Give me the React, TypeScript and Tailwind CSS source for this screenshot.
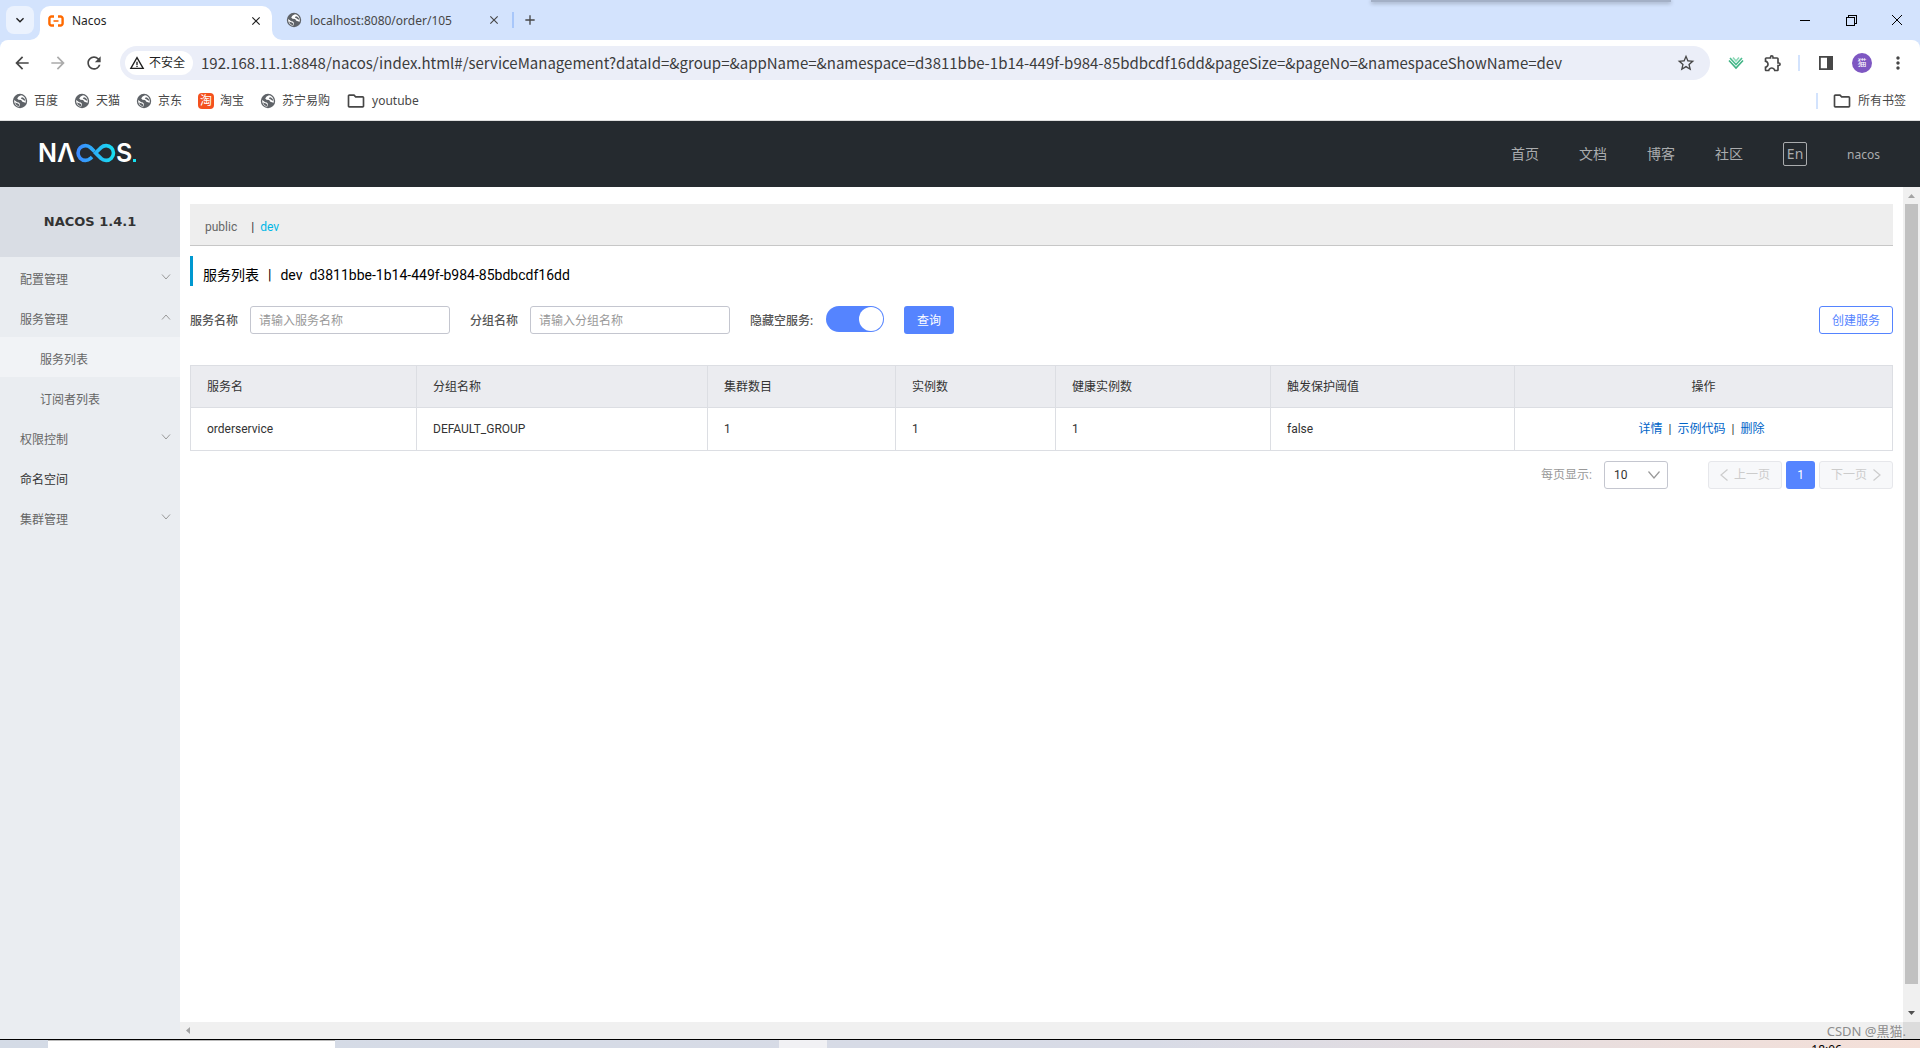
import React from "react"
import {
  MdAdd,
  MdArrowBack,
  MdArrowForward,
  MdClose,
  MdExpandMore,
  MdMoreVert,
  MdOutlineExtension,
  MdOutlineFolder,
  MdRefresh,
  MdStarBorder,
  MdWarningAmber,
} from "react-icons/md"

const PAGE_URL =
  "192.168.11.1:8848/nacos/index.html#/serviceManagement?dataId=&group=&appName=&namespace=d3811bbe-1b14-449f-b984-85bdbcdf16dd&pageSize=&pageNo=&namespaceShowName=dev"

const BOOKMARKS = [
  { label: "百度", icon: "globe" },
  { label: "天猫", icon: "globe" },
  { label: "京东", icon: "globe" },
  { label: "淘宝", icon: "taobao" },
  { label: "苏宁易购", icon: "globe" },
  { label: "youtube", icon: "folder" },
]

const NAV_LINKS = ["首页", "文档", "博客", "社区"]

const MENU = [
  { label: "配置管理", arrow: "down" },
  { label: "服务管理", arrow: "up", children: ["服务列表", "订阅者列表"] },
  { label: "权限控制", arrow: "down" },
  { label: "命名空间" },
  { label: "集群管理", arrow: "down" },
]

const COLUMNS = ["服务名", "分组名称", "集群数目", "实例数", "健康实例数", "触发保护阈值"]

const SERVICES = [["orderservice", "DEFAULT_GROUP", "1", "1", "1", "false"]]

function GlobeIcon() {
  return (
    <svg viewBox="0 0 16 16" className="size-4 shrink-0">
      <circle cx="8" cy="8" r="7.2" fill="#5f6368" />
      <path d="M2.200 7 5.200 9.200l1.600.3 1.200 1.500-.8 2.800C4.300 13.400 2 11 2.200 7Z" fill="#fff" />
      <path
        d="M9 2.300 6.600 3.600 5.200 5.400l1.300 1.400 2.600.2 1.300 1.700 2.300.9 1 .2C14.400 5.600 12 2.700 9 2.300Z"
        fill="#fff"
      />
      <path d="M9.800 4.200 8.800 5.600l2 1 1.600 1.200 .9-.6C12.600 5.400 11.500 4.400 9.800 4.200Z" fill="#5f6368" />
      <path d="M3 9.500c.6 2 2 3.300 3.800 3.700l.5-1.600-1.300-1z" fill="#5f6368" />
    </svg>
  )
}

function TaobaoIcon() {
  return (
    <span className="flex size-4 shrink-0 items-center justify-center rounded-sm bg-[#f4511e] text-[12px] leading-4 text-white">
      淘
    </span>
  )
}

function BookmarkIcon({ icon }: { icon: string }) {
  if (icon === "taobao") return <TaobaoIcon />
  if (icon === "folder") return <MdOutlineFolder className="size-5 shrink-0 text-[#474747]" />
  return <GlobeIcon />
}

function NacosFavicon() {
  return (
    <svg viewBox="0 0 16 16" className="size-4 shrink-0" fill="none" stroke="#ff6a00" strokeWidth="2.400">
      <path d="M6 3.500H3.500A2 2 0 0 0 1.400 5.500v5a2 2 0 0 0 2.100 2H6" />
      <path d="M10 3.500h2.500a2 2 0 0 1 2.100 2v5a2 2 0 0 1-2.100 2H10" />
      <path d="M5.500 8h5" strokeWidth="1.600" />
    </svg>
  )
}

function NacosLogo() {
  return (
    <svg viewBox="-4 -5 106 34" className="h-[34px] w-[106px]">
      <defs>
        <linearGradient id="loop" gradientUnits="userSpaceOnUse" x1="36" x2="75" y1="0" y2="0">
          <stop offset="0" stopColor="#3f86ff" />
          <stop offset="1" stopColor="#16e0f0" />
        </linearGradient>
      </defs>
      <g fill="#fff" className="font-['Inter'] text-[25px] font-semibold">
        <text x="-2" y="20">N</text>
        <text x="17" y="20">Λ</text>
        <text x="76" y="20">S</text>
      </g>
      <g fill="none" stroke="url(#loop)" strokeWidth="3.600">
        <path d="M54.500 9.500 50.500 5.600A7.400 7.400 0 1 0 50.500 16.400L52 14.900" />
        <path d="M55.500 11 61 5.600A7.400 7.400 0 1 1 61 16.400Z" />
      </g>
      <rect x="93" y="17" width="3" height="3" fill="#16e0f0" />
    </svg>
  )
}

function TabStrip() {
  return (
    <div className="relative flex h-10 items-center bg-[#d3e3fd] pl-1.5">
      <button aria-label="搜索标签页" className="flex size-7 items-center justify-center rounded-lg bg-[#ebf2fe]">
        <MdExpandMore className="size-4 text-[#1f1f1f]" />
      </button>
      <div className="relative ml-1.5 flex h-[34px] w-[232px] items-center self-end rounded-t-[10px] bg-white pr-[9px] pb-1 pl-2">
        <svg viewBox="0 0 10 10" className="absolute bottom-0 -left-2.5 size-2.5" fill="#fff">
          <path d="M10 0v10H0A10 10 0 0 0 10 0Z" />
        </svg>
        <svg viewBox="0 0 10 10" className="absolute -right-2.5 bottom-0 size-2.5" fill="#fff">
          <path d="M0 0v10h10A10 10 0 0 1 0 0Z" />
        </svg>
        <NacosFavicon />
        <span className="ml-2 flex-1 text-[12px] text-[#1f1f1f]">Nacos</span>
        <button aria-label="关闭">
          <MdClose className="size-3.5 text-[#1f1f1f]" />
        </button>
      </div>
      <div className="ml-3.5 flex w-[216px] items-center pr-px">
        <GlobeIcon />
        <span className="ml-2 flex-1 pt-0.5 text-[12px] text-[#474747]">localhost:8080/order/105</span>
        <button aria-label="关闭">
          <MdClose className="size-3.5 text-[#474747]" />
        </button>
      </div>
      <div className="ml-2.5 h-4 w-0.5 bg-[#a8c7fa]" />
      <button aria-label="新标签页" className="ml-2">
        <MdAdd className="size-4 text-[#474747]" />
      </button>
      {/* edge of a window that hangs over the top of the screen */}
      <div className="absolute top-0 left-[1371px] h-0.5 w-[300px] bg-[#a3b0c6] shadow-[0_1px_4px_rgba(0,0,0,0.4)]" />
      <div className="ml-auto flex items-center text-black">
        <button aria-label="最小化" className="flex w-[46px] justify-center">
          <svg viewBox="0 0 10 10" className="size-2.5" stroke="currentColor" shapeRendering="crispEdges">
            <path d="M0 5.500h10" />
          </svg>
        </button>
        <button aria-label="还原" className="flex w-[46px] justify-center">
          <svg viewBox="0 0 11 11" className="size-[11px]" fill="none" stroke="currentColor" shapeRendering="crispEdges">
            <path d="M.5 2.500h8v8h-8zM2.500 2.500v-2h8v8h-2" />
          </svg>
        </button>
        <button aria-label="关闭窗口" className="flex w-[46px] justify-center">
          <svg viewBox="0 0 10 10" className="size-2.5" stroke="currentColor">
            <path d="M0 0l10 10M10 0 0 10" />
          </svg>
        </button>
      </div>
    </div>
  )
}

function Toolbar() {
  return (
    <div className="bg-[#d3e3fd]">
      <div className="flex h-[46px] items-center rounded-t-lg bg-white pr-3">
        <div className="flex w-[120px] items-center gap-4 pl-3 text-[#474747]">
          <button aria-label="后退"><MdArrowBack className="size-5" /></button>
          <button aria-label="前进"><MdArrowForward className="size-5 text-[#ababab]" /></button>
          <button aria-label="刷新"><MdRefresh className="size-5" /></button>
        </div>
        <div className="flex h-[34px] flex-1 items-center rounded-full bg-[#ebeef8] pr-3.5 pl-[5px]">
          <button className="flex h-6 items-center gap-1 rounded-full bg-white pr-2 pl-1 text-[12px] text-[#1f1f1f]">
            <MdWarningAmber className="size-4" />
            不安全
          </button>
          <input
            aria-label="地址栏"
            defaultValue={PAGE_URL}
            className="ml-2 flex-1 bg-transparent font-['Noto_Sans_CJK_SC',sans-serif] text-[15px] text-[#3c3c3c] outline-none"
          />
          <button aria-label="收藏"><MdStarBorder className="size-5 text-[#474747]" /></button>
        </div>
        <div className="ml-[18px] flex items-center text-[#474747]">
          <svg viewBox="0 0 16 16" className="size-4" fill="none" strokeWidth="1.600">
            <path d="M1 5.500 8 13l7-7.500" stroke="#3fb384" />
            <path d="M2 3l6 6.500L14 3" stroke="#4cbd90" />
            <path d="M5 2.500 8 6l3-3.500" stroke="#8fd9b9" />
          </svg>
          <button aria-label="扩展程序" className="ml-[19px]"><MdOutlineExtension className="size-5" /></button>
          <div className="ml-[15px] h-4 w-0.5 bg-[#d3e3fd]" />
          <button aria-label="侧边栏" className="ml-[18px]">
            <svg viewBox="0 0 16 16" className="size-4">
              <path d="M1.900 1.900h12.200v12.200H1.900z" fill="none" stroke="currentColor" strokeWidth="1.800" />
              <path d="M9 2h6v12H9z" fill="currentColor" />
            </svg>
          </button>
          <button className="ml-[18px] size-5 rounded-full bg-[#7e57c2] text-center text-[9px] leading-5 text-white">猫</button>
          <button aria-label="菜单" className="ml-4"><MdMoreVert className="size-5" /></button>
        </div>
      </div>
    </div>
  )
}

function BookmarksBar() {
  return (
    <div className="flex h-[35px] items-center border-b border-[#dfdfdf] bg-white pb-1 pr-3.5 pl-3 text-[12px] text-[#474747]">
      <nav className="flex flex-1 items-center gap-4">
        {BOOKMARKS.map((b) => (
          <a key={b.label} href="#" className="flex items-center gap-1.5">
            <BookmarkIcon icon={b.icon} />
            {b.label}
          </a>
        ))}
      </nav>
      <div className="h-4 w-0.5 bg-[#d3e3fd]" />
      <a href="#" className="ml-3.5 flex items-center gap-1.5">
        <MdOutlineFolder className="size-5" />
        所有书签
      </a>
    </div>
  )
}

function SiteHeader() {
  return (
    <header className="flex h-[66px] shrink-0 items-center bg-[#252a2f] pr-10 pl-9 text-[#aaacae]">
      <NacosLogo />
      <nav className="ml-auto flex items-center gap-10 text-[14px]">
        {NAV_LINKS.map((label) => (
          <a key={label} href="#" className="leading-5">{label}</a>
        ))}
        <button className="h-6 w-6 rounded-xs border border-[#aaacae] text-center leading-5">En</button>
        <a href="#" className="pt-0.5 text-[12px]">nacos</a>
      </nav>
    </header>
  )
}

function MenuArrow({ arrow }: { arrow: string }) {
  return (
    <svg viewBox="0 0 10 6" className="mr-[9px] h-1.5 w-2.5" fill="none" stroke="#999">
      {arrow === "down" ? <path d="M1 .5 5 5l4-4.500" /> : <path d="M1 5.500 5 1l4 4.500" />}
    </svg>
  )
}

function Sidebar() {
  return (
    <aside className="w-[180px] shrink-0 bg-[#eaedf1] text-[12px] text-[#666]">
      <h1 className="h-[70px] bg-[#d9dde4] text-center font-['DejaVu_Sans',sans-serif] text-[13px] leading-[70px] font-bold text-[#333]">
        NACOS 1.4.1
      </h1>
      <ul>
        {MENU.map((item) => (
          <li key={item.label}>
            <a
              href="#"
              className={`flex h-10 items-center justify-between pl-5 ${item.arrow ? "" : "text-[#333]"}`}
            >
              <span className="pt-1.5">{item.label}</span>
              {item.arrow && <MenuArrow arrow={item.arrow} />}
            </a>
            {item.children && (
              <ul>
                {item.children.map((child, i) => (
                  <li key={child}>
                    <a
                      href="#"
                      className={`flex h-10 items-center pt-1.5 pl-10 ${i === 0 ? "bg-[#f1f3f6]" : ""}`}
                    >
                      {child}
                    </a>
                  </li>
                ))}
              </ul>
            )}
          </li>
        ))}
      </ul>
    </aside>
  )
}

function SearchForm() {
  return (
    <form className="mt-5 flex h-7 items-center text-[12px]" onSubmit={(e) => e.preventDefault()}>
      <label htmlFor="service" className="mr-3 pt-0.5 font-medium text-[#555]">服务名称</label>
      <input
        id="service"
        placeholder="请输入服务名称"
        className="mr-5 h-7 w-[200px] rounded-[3px] border border-[#c4c6cf] px-2 pt-0.5 placeholder:text-[#999]"
      />
      <label htmlFor="group" className="mr-3 pt-0.5 font-medium text-[#555]">分组名称</label>
      <input
        id="group"
        placeholder="请输入分组名称"
        className="mr-5 h-7 w-[200px] rounded-[3px] border border-[#c4c6cf] px-2 pt-0.5 placeholder:text-[#999]"
      />
      <label htmlFor="hide-empty" className="w-[76px] pt-0.5 font-medium text-[#555]">隐藏空服务:</label>
      <input
        id="hide-empty"
        type="checkbox"
        role="switch"
        defaultChecked
        className="mr-5 flex h-[26px] w-[58px] appearance-none self-start rounded-full bg-[#c4c6cf] p-px before:size-6 before:rounded-full before:bg-white checked:justify-end checked:bg-[#5584ff]"
      />
      <button className="h-7 w-[50px] rounded-[3px] bg-[#5584ff] pt-0.5 text-white">查询</button>
      <button type="button" className="ml-auto h-7 w-[74px] rounded-[3px] border border-[#5584ff] pt-0.5 text-[#5584ff]">
        创建服务
      </button>
    </form>
  )
}

function ServiceTable() {
  return (
    <table className="mt-[31px] w-full table-fixed border-collapse text-left text-[12px] text-[#333]">
      <colgroup>
        <col className="w-[226px]" />
        <col className="w-[291px]" />
        <col className="w-[188px]" />
        <col className="w-[160px]" />
        <col className="w-[215px]" />
        <col className="w-[244px]" />
        <col />
      </colgroup>
      <thead>
        <tr className="h-[42px] bg-[#ebecf0]">
          {COLUMNS.map((c) => (
            <th key={c} className="border border-[#dcdee3] px-4 font-normal">{c}</th>
          ))}
          <th className="border border-[#dcdee3] text-center font-normal">操作</th>
        </tr>
      </thead>
      <tbody>
        {SERVICES.map((row) => (
          <tr key={row[0]} className="h-[43px]">
            {row.map((cell, i) => (
              <td key={i} className="border border-[#dcdee3] px-4">{cell}</td>
            ))}
            <td className="border border-[#dcdee3]">
              <div className="flex justify-center gap-1.5 pr-1">
                <a href="#" className="text-[#0064c8]">详情</a>
                <span>|</span>
                <a href="#" className="text-[#0064c8]">示例代码</a>
                <span>|</span>
                <a href="#" className="text-[#0064c8]">删除</a>
              </div>
            </td>
          </tr>
        ))}
      </tbody>
    </table>
  )
}

function Pagination() {
  return (
    <div className="mt-2.5 flex h-7 items-center justify-end text-[12px]">
      <label htmlFor="page-size" className="mr-3 text-[#999]">每页显示:</label>
      <div className="relative mr-10">
        <select
          id="page-size"
          className="h-7 w-16 appearance-none rounded-[3px] border border-[#c4c6cf] bg-white pl-[9px] text-[#333]"
        >
          <option>10</option>
          <option>20</option>
        </select>
        <svg
          viewBox="0 0 12 8"
          className="pointer-events-none absolute top-2.5 right-2 h-2 w-3"
          fill="none"
          stroke="#999"
          strokeWidth="1.200"
        >
          <path d="M.5.5 6 7 11.500.5" />
        </svg>
      </div>
      <div className="flex gap-1">
        <button disabled className="flex h-7 w-[74px] items-center justify-center gap-1.5 rounded-[3px] border border-[#e6e7eb] bg-[#f7f8fa] text-[#ccc]">
          <svg viewBox="0 0 8 12" className="h-3 w-2" fill="none" stroke="currentColor" strokeWidth="1.200">
            <path d="M7.500.5 1 6l6.500 5.500" />
          </svg>
          上一页
        </button>
        <button className="h-7 w-[29px] rounded-[3px] bg-[#5584ff] text-white">1</button>
        <button disabled className="flex h-7 w-[74px] items-center justify-center gap-1.5 rounded-[3px] border border-[#e6e7eb] bg-[#f7f8fa] text-[#ccc]">
          下一页
          <svg viewBox="0 0 8 12" className="h-3 w-2" fill="none" stroke="currentColor" strokeWidth="1.200">
            <path d="M.5.5 7 6 .5 11.500" />
          </svg>
        </button>
      </div>
    </div>
  )
}

function VerticalScrollbar() {
  return (
    <div className="flex w-[17px] shrink-0 flex-col items-center bg-[#f0f0f0]">
      <svg viewBox="0 0 17 17" className="size-[17px]" fill="#a3a3a3">
        <path d="M5 11h7L8.500 7z" />
      </svg>
      <div className="w-[13px] flex-1 bg-[#c1c1c1]" />
      <svg viewBox="0 0 17 38" className="h-[38px] w-[17px]" fill="#505050">
        <path d="M5 27h7l-3.500 4z" />
      </svg>
    </div>
  )
}

function Taskbar() {
  return (
    <footer className="flex h-[9px] shrink-0 overflow-hidden border-t border-black bg-linear-to-r from-[#d4dbe6] via-[#d8dbe6] via-60% to-[#f5e0d8]">
      <div className="ml-12 w-[287px] border-t border-[#bbb] bg-white" />
      <div className="ml-[444px] w-12 bg-[#f1f1f4]" />
      <span className="mt-0.5 mr-[78px] ml-auto text-[12px] leading-4 text-black">18:06</span>
    </footer>
  )
}

export default function App() {
  return (
    <div className="flex h-screen flex-col overflow-hidden bg-white font-['Noto_Sans','Noto_Sans_CJK_SC',sans-serif]">
      <TabStrip />
      <Toolbar />
      <BookmarksBar />
      <SiteHeader />
      <div className="flex min-h-0 flex-1">
        <Sidebar />
        <div className="flex min-w-0 flex-1 flex-col">
          <div className="flex min-h-0 flex-1">
            <main className="min-w-0 flex-1 overflow-hidden px-2.5 pt-[17px] font-['Roboto','Noto_Sans_CJK_SC',sans-serif]">
              <div className="flex h-[42px] items-center border-b border-[#c7c7c7] bg-[#eee] pt-1 pl-[15px] text-[12px] text-[#666]">
                <a href="#">public</a>
                <span className="ml-3.5 text-[#333]">|</span>
                <a href="#" className="ml-1.5 text-[#00b7e6]">dev</a>
              </div>
              <h2 className="mt-2.5 flex h-[30px] items-center border-l-3 border-[#0098d0] pt-2 pl-2.5 text-[14px] text-black">
                <span>服务列表</span>
                <span className="mx-[9px]">|</span>
                <span>dev</span>
                <span className="ml-[7px]">d3811bbe-1b14-449f-b984-85bdbcdf16dd</span>
              </h2>
              <SearchForm />
              <ServiceTable />
              <Pagination />
            </main>
            <VerticalScrollbar />
          </div>
          <div className="relative flex h-[17px] shrink-0 items-center bg-[#f0f0f0]">
            <svg viewBox="0 0 17 17" className="size-[17px]" fill="#a3a3a3">
              <path d="M10 5v7L6 8.500z" />
            </svg>
            <div className="ml-auto h-full w-[17px] bg-[#dcdcdc]" />
            <span className="absolute right-3.5 pt-0.5 text-[13px] whitespace-nowrap text-[#8c8c8c]">CSDN @黒猫.</span>
          </div>
        </div>
      </div>
      <Taskbar />
    </div>
  )
}
